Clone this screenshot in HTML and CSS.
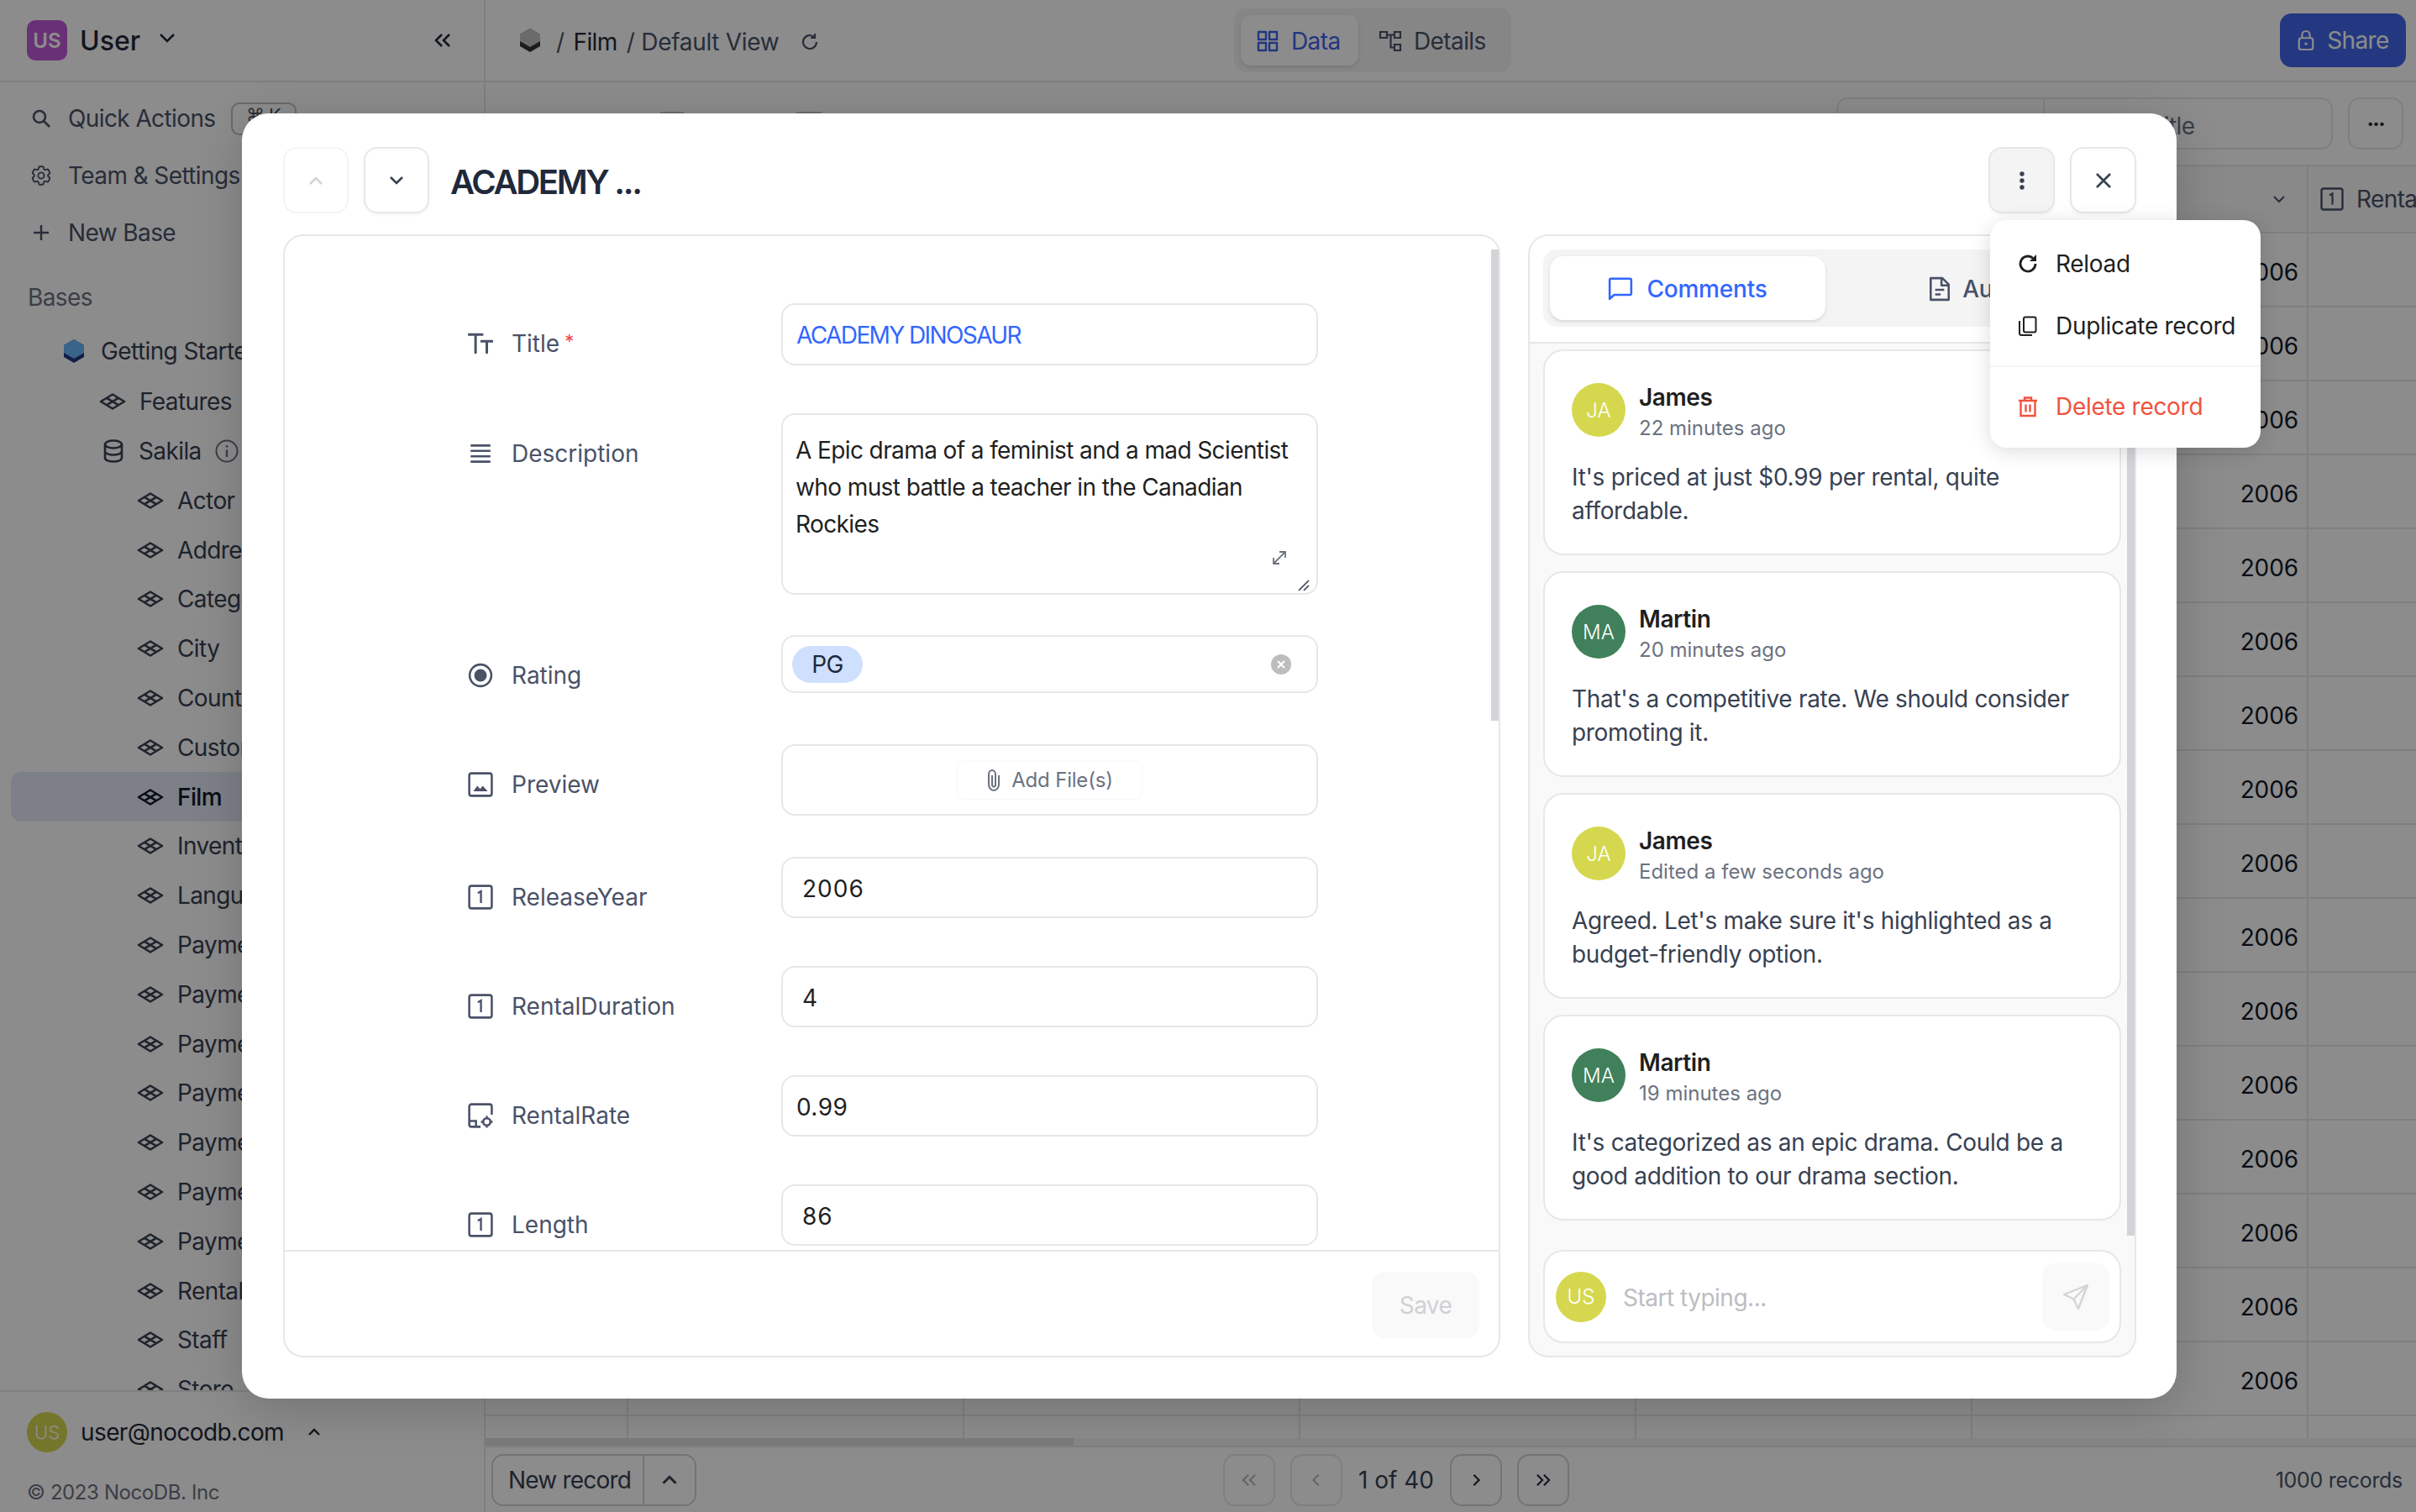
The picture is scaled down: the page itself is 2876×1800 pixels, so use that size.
FILE: index.html
```html
<!DOCTYPE html>
<html>
<head>
  <title>Film - NocoDB</title>
  <link rel="stylesheet" href="styles.css">
</head>
<body>
  <svg class="sprite" width="0" height="0">
    <symbol id="i-table" viewBox="0 0 32 20"><path d="M16 1.5 30 10 16 18.5 2 10Z M9 5.8 23 14.2 M23 5.8 9 14.2" fill="none" stroke="currentColor" stroke-width="2.6" stroke-linejoin="round"/></symbol>
    <symbol id="i-num" viewBox="0 0 28 28"><rect x="1.5" y="1.5" width="25" height="25" rx="2.5" fill="none" stroke="currentColor" stroke-width="2.4"/><path d="M11 9.5 14.5 7.5V20.5" fill="none" stroke="currentColor" stroke-width="2.2"/></symbol>
  </svg>

  <div class="app">
    <aside class="sidebar">
      <div class="side-head">
        <span class="org-avatar">US</span>
        <span class="org-name">User</span>
        <svg class="side-chevron" viewBox="0 0 20 12"><path d="M2 2 10 10 18 2" fill="none" stroke="currentColor" stroke-width="2.6"/></svg>
        <svg class="side-collapse" viewBox="0 0 22 18"><path d="M10 2 3 9 10 16M19 2 12 9 19 16" fill="none" stroke="currentColor" stroke-width="2.6"/></svg>
      </div>
      <div class="side-scroll">
        <div class="nav-item">
          <svg class="nav-icon" viewBox="0 0 24 24"><circle cx="10" cy="10" r="7" fill="none" stroke="currentColor" stroke-width="2.6"/><path d="M15 15 22 22" stroke="currentColor" stroke-width="2.6"/></svg>
          <span>Quick Actions</span><span class="kbd">⌘ K</span>
        </div>
        <div class="nav-item">
          <svg class="nav-icon" viewBox="2 2 20 20"><path d="M9.594 3.94c.09-.542.56-.94 1.11-.94h2.593c.55 0 1.02.398 1.11.94l.213 1.281c.063.374.313.686.645.87.074.04.147.083.22.127.324.196.72.257 1.075.124l1.217-.456a1.125 1.125 0 011.37.49l1.296 2.247a1.125 1.125 0 01-.26 1.431l-1.003.827c-.293.24-.438.613-.431.992a6.759 6.759 0 010 .255c-.007.378.138.75.43.99l1.005.828c.424.35.534.954.26 1.43l-1.298 2.247a1.125 1.125 0 01-1.369.491l-1.217-.456c-.355-.133-.75-.072-1.076.124a6.57 6.57 0 01-.22.128c-.331.183-.581.495-.644.869l-.213 1.28c-.09.543-.56.941-1.11.941h-2.594c-.55 0-1.02-.398-1.11-.94l-.213-1.281c-.062-.374-.312-.686-.644-.87a6.52 6.52 0 01-.22-.127c-.325-.196-.72-.257-1.076-.124l-1.217.456a1.125 1.125 0 01-1.369-.49l-1.297-2.247a1.125 1.125 0 01.26-1.431l1.004-.827c.292-.24.437-.613.43-.992a6.932 6.932 0 010-.255c.007-.378-.138-.75-.43-.99l-1.004-.828a1.125 1.125 0 01-.26-1.43l1.297-2.247a1.125 1.125 0 011.37-.491l1.216.456c.356.133.751.072 1.076-.124.072-.044.146-.087.22-.128.332-.183.582-.495.644-.869l.214-1.281z" fill="none" stroke="currentColor" stroke-width="1.6"/><circle cx="12" cy="12" r="3" fill="none" stroke="currentColor" stroke-width="1.6"/></svg>
          <span>Team &amp; Settings</span>
        </div>
        <div class="nav-item">
          <svg class="nav-icon" viewBox="0 0 24 24"><path d="M12 3V21M3 12H21" stroke="currentColor" stroke-width="2.4"/></svg>
          <span>New Base</span>
        </div>
        <div class="side-label">Bases</div>
        <div class="tree-item tree-base">
          <svg class="base-icon" viewBox="0 0 26 30"><path d="M13 1 25 8V22L13 29 1 22V8Z" fill="#213788"/><path d="M13 1 25 8V17L13 24 1 17V8Z" fill="#6ab8f7"/></svg>
          <span>Getting Started</span>
        </div>
        <div class="tree-item tree-sub"><svg class="table-icon"><use href="#i-table"/></svg><span>Features</span></div>
        <div class="tree-item tree-sub">
          <svg class="db-icon" viewBox="0 0 24 28"><ellipse cx="12" cy="6" rx="10" ry="4.5" fill="none" stroke="currentColor" stroke-width="2.6"/><path d="M2 6V22C2 25 7 26.5 12 26.5S22 25 22 22V6M2 14C2 17 7 18.5 12 18.5S22 17 22 14" fill="none" stroke="currentColor" stroke-width="2.6"/></svg>
          <span>Sakila</span>
          <svg class="info-icon" viewBox="0 0 28 28"><circle cx="14" cy="14" r="12.5" fill="none" stroke="currentColor" stroke-width="2"/><path d="M14 12.5V21M14 7V9.5" stroke="currentColor" stroke-width="2.4"/></svg>
        </div>
        <div class="tree-item tree-table"><svg class="table-icon"><use href="#i-table"/></svg><span>Actor</span></div>
        <div class="tree-item tree-table"><svg class="table-icon"><use href="#i-table"/></svg><span>Address</span></div>
        <div class="tree-item tree-table"><svg class="table-icon"><use href="#i-table"/></svg><span>Category</span></div>
        <div class="tree-item tree-table"><svg class="table-icon"><use href="#i-table"/></svg><span>City</span></div>
        <div class="tree-item tree-table"><svg class="table-icon"><use href="#i-table"/></svg><span>Country</span></div>
        <div class="tree-item tree-table"><svg class="table-icon"><use href="#i-table"/></svg><span>Customer</span></div>
        <div class="tree-item tree-table tree-active"><svg class="table-icon"><use href="#i-table"/></svg><span>Film</span></div>
        <div class="tree-item tree-table"><svg class="table-icon"><use href="#i-table"/></svg><span>Inventory</span></div>
        <div class="tree-item tree-table"><svg class="table-icon"><use href="#i-table"/></svg><span>Language</span></div>
        <div class="tree-item tree-table"><svg class="table-icon"><use href="#i-table"/></svg><span>Payment</span></div>
        <div class="tree-item tree-table"><svg class="table-icon"><use href="#i-table"/></svg><span>Payment</span></div>
        <div class="tree-item tree-table"><svg class="table-icon"><use href="#i-table"/></svg><span>Payment</span></div>
        <div class="tree-item tree-table"><svg class="table-icon"><use href="#i-table"/></svg><span>Payment</span></div>
        <div class="tree-item tree-table"><svg class="table-icon"><use href="#i-table"/></svg><span>Payment</span></div>
        <div class="tree-item tree-table"><svg class="table-icon"><use href="#i-table"/></svg><span>Payment</span></div>
        <div class="tree-item tree-table"><svg class="table-icon"><use href="#i-table"/></svg><span>Payment</span></div>
        <div class="tree-item tree-table"><svg class="table-icon"><use href="#i-table"/></svg><span>Rental</span></div>
        <div class="tree-item tree-table"><svg class="table-icon"><use href="#i-table"/></svg><span>Staff</span></div>
        <div class="tree-item tree-table"><svg class="table-icon"><use href="#i-table"/></svg><span>Store</span></div>
      </div>
      <div class="side-foot">
        <div class="user-row">
          <span class="avatar avatar-side">US</span>
          <span>user@nocodb.com</span>
          <svg class="user-chevron" viewBox="0 0 16 10"><path d="M2 8 8 2 14 8" fill="none" stroke="currentColor" stroke-width="2.4"/></svg>
        </div>
        <div class="copyright">© 2023 NocoDB. Inc</div>
      </div>
    </aside>

    <main class="main">
      <header class="topbar">
        <div class="crumbs">
          <svg class="crumb-icon" viewBox="0 0 26 30"><path d="M13 1 25 8V22L13 29 1 22V8Z" fill="#333333"/><path d="M13 1 25 8V16L13 23 1 16V8Z" fill="#c4c4c4"/></svg>
          <span class="crumb-sep">/</span>
          <span class="crumb-strong">Film</span>
          <span class="crumb-sep">/</span>
          <span class="crumb-view">Default View</span>
          <svg class="crumb-reload" viewBox="0 0 24 24"><path d="M20 12A8 8 0 1 1 17.5 6.2M18 2V7H13" fill="none" stroke="currentColor" stroke-width="2.2"/></svg>
        </div>
        <div class="view-tabs">
          <div class="view-tab view-tab-on">
            <svg class="view-icon" viewBox="0 0 28 28"><path d="M3 3H12V12H3ZM16 3H25V12H16ZM3 16H12V25H3ZM16 16H25V25H16Z" fill="none" stroke="currentColor" stroke-width="2.4" stroke-linejoin="round"/></svg>
            <span>Data</span>
          </div>
          <div class="view-tab view-tab-off">
            <svg class="view-icon" viewBox="0 0 28 28"><path d="M2 3H10V10H2ZM19 3H26V10H19ZM19 18H26V25H19ZM10 6.5H19M14.5 6.5V21.5H19" fill="none" stroke="currentColor" stroke-width="2.2"/></svg>
            <span>Details</span>
          </div>
        </div>
        <div class="share-btn">
          <svg class="share-icon" viewBox="0 0 24 28"><rect x="3" y="11" width="18" height="15" rx="3" fill="none" stroke="currentColor" stroke-width="2.4"/><path d="M7 11V7A5 5 0 0 1 17 7V11" fill="none" stroke="currentColor" stroke-width="2.4"/><circle cx="12" cy="18.5" r="1.8" fill="currentColor"/></svg>
          <span>Share</span>
        </div>
      </header>

      <div class="toolbar">
        <div class="tool-hint tool-hint-a"></div>
        <div class="tool-hint tool-hint-b"></div>
        <div class="search-box"><div class="search-field"></div><div class="search-input">Filter by Title</div></div>
        <div class="more-btn">•••</div>
      </div>

      <div class="grid-head">
        <svg class="grid-chevron" viewBox="0 0 16 10"><path d="M2 2 8 8 14 2" fill="none" stroke="currentColor" stroke-width="2"/></svg>
        <div class="head-cell">
          <svg class="num-head-icon"><use href="#i-num"/></svg>
          <span>RentalDuration</span>
        </div>
      </div>

      <div class="grid-body">
        <div class="grid-row"><span class="year">2006</span></div>
        <div class="grid-row"><span class="year">2006</span></div>
        <div class="grid-row"><span class="year">2006</span></div>
        <div class="grid-row"><span class="year">2006</span></div>
        <div class="grid-row"><span class="year">2006</span></div>
        <div class="grid-row"><span class="year">2006</span></div>
        <div class="grid-row"><span class="year">2006</span></div>
        <div class="grid-row"><span class="year">2006</span></div>
        <div class="grid-row"><span class="year">2006</span></div>
        <div class="grid-row"><span class="year">2006</span></div>
        <div class="grid-row"><span class="year">2006</span></div>
        <div class="grid-row"><span class="year">2006</span></div>
        <div class="grid-row"><span class="year">2006</span></div>
        <div class="grid-row"><span class="year">2006</span></div>
        <div class="grid-row"><span class="year">2006</span></div>
        <div class="grid-row"><span class="year">2006</span></div>
      </div>

      <div class="h-scroll"><div class="h-thumb"></div></div>

      <footer class="main-foot">
        <div class="new-record"><span class="new-label">New record</span><span class="new-caret"><svg class="foot-svg" viewBox="0 0 16 10"><path d="M2 8 8 2 14 8" fill="none" stroke="currentColor" stroke-width="2.4"/></svg></span></div>
        <div class="pager">
          <span class="page-btn page-off"><svg class="foot-svg" viewBox="0 0 22 18"><path d="M10 2 3 9 10 16M19 2 12 9 19 16" fill="none" stroke="currentColor" stroke-width="2.4"/></svg></span>
          <span class="page-btn page-off"><svg class="foot-svg" viewBox="0 0 22 18"><path d="M14 2 7 9 14 16" fill="none" stroke="currentColor" stroke-width="2.4"/></svg></span>
          <span class="page-text">1 of 40</span>
          <span class="page-btn"><svg class="foot-svg" viewBox="0 0 22 18"><path d="M8 2 15 9 8 16" fill="none" stroke="currentColor" stroke-width="2.4"/></svg></span>
          <span class="page-btn"><svg class="foot-svg" viewBox="0 0 22 18"><path d="M3 2 10 9 3 16M12 2 19 9 12 16" fill="none" stroke="currentColor" stroke-width="2.4"/></svg></span>
        </div>
        <div class="record-count">1000 records</div>
      </footer>
    </main>
  </div>

  <div class="overlay">
    <div class="modal">
      <div class="modal-head">
        <button class="sq-btn sq-off"><svg class="sq-svg" viewBox="0 0 18 12"><path d="M2 10 9 3 16 10" fill="none" stroke="currentColor" stroke-width="2.6"/></svg></button>
        <button class="sq-btn"><svg class="sq-svg" viewBox="0 0 18 12"><path d="M2 2 9 9 16 2" fill="none" stroke="currentColor" stroke-width="2.6"/></svg></button>
        <h1 class="modal-title">ACADEMY ...</h1>
        <button class="sq-btn sq-round sq-on">
          <svg class="dots-svg" viewBox="0 0 8 24"><circle cx="4" cy="4" r="2.7"/><circle cx="4" cy="12" r="2.7"/><circle cx="4" cy="20" r="2.7"/></svg>
        </button>
        <button class="sq-btn sq-round"><svg class="x-svg" viewBox="0 0 20 20"><path d="M2 2 18 18M18 2 2 18" fill="none" stroke="currentColor" stroke-width="2.6"/></svg></button>
      </div>

      <div class="modal-body">
        <section class="form-panel">
          <div class="form-scroll">
            <div class="form-row">
              <label class="field-label">
                <svg class="field-icon" viewBox="0 0 28 28"><path d="M1 4H16M8.5 4V24M15 11.5H27M21 11.5V24" fill="none" stroke="currentColor" stroke-width="2.8" stroke-linecap="round"/></svg>
                <span>Title</span><span class="req">*</span>
              </label>
              <div class="field field-title">ACADEMY DINOSAUR</div>
            </div>
            <div class="form-row gap-desc">
              <label class="field-label">
                <svg class="field-icon" viewBox="0 0 28 28"><path d="M3 5H25M3 11H25M3 17H25M3 23H25" fill="none" stroke="currentColor" stroke-width="2.4"/></svg>
                <span>Description</span>
              </label>
              <div class="field field-desc">
                A Epic drama of a feminist and a mad Scientist who must battle a teacher in the Canadian Rockies
                <svg class="expand-icon" viewBox="0 0 20 20"><path d="M3 17 17 3M10 3H17V10M3 10V17H10" fill="none" stroke="currentColor" stroke-width="1.8"/></svg>
                <svg class="resize-grip" viewBox="0 0 14 14"><path d="M1 13 13 1M7 13 13 7" stroke="currentColor" stroke-width="1.6"/></svg>
              </div>
            </div>
            <div class="form-row gap-rating">
              <label class="field-label">
                <svg class="field-icon" viewBox="0 0 28 28"><circle cx="14" cy="14" r="12" fill="none" stroke="currentColor" stroke-width="2.4"/><circle cx="14" cy="14" r="7" fill="currentColor"/></svg>
                <span>Rating</span>
              </label>
              <div class="field field-rating">
                <span class="pill">PG</span>
                <svg class="clear-icon" viewBox="0 0 24 24"><circle cx="12" cy="12" r="12" fill="#bdbdbd"/><path d="M8 8 16 16M16 8 8 16" stroke="#fff" stroke-width="2"/></svg>
              </div>
            </div>
            <div class="form-row gap-preview">
              <label class="field-label">
                <svg class="field-icon" viewBox="0 0 28 28"><rect x="1.5" y="1.5" width="25" height="25" rx="2.5" fill="none" stroke="currentColor" stroke-width="2.4"/><path d="M6 21.5 10.5 15.5 13.5 19 16.5 15.5 22 21.5Z" fill="currentColor"/></svg>
                <span>Preview</span>
              </label>
              <div class="field field-preview">
                <div class="add-files">
                  <svg class="clip-icon" viewBox="0 0 18 28"><path d="M15 8V19A6 7 0 0 1 3 19V7A4 5 0 0 1 11 7V19A2 2.5 0 0 1 7 19V8" fill="none" stroke="currentColor" stroke-width="2"/></svg>
                  <span>Add File(s)</span>
                </div>
              </div>
            </div>
            <div class="form-row">
              <label class="field-label"><svg class="field-icon"><use href="#i-num"/></svg><span>ReleaseYear</span></label>
              <div class="field field-num">2006</div>
            </div>
            <div class="form-row">
              <label class="field-label"><svg class="field-icon"><use href="#i-num"/></svg><span>RentalDuration</span></label>
              <div class="field field-num">4</div>
            </div>
            <div class="form-row">
              <label class="field-label">
                <svg class="field-icon" viewBox="0 0 28 28"><path d="M14 26.5H4A2.5 2.5 0 0 1 1.5 24V4A2.5 2.5 0 0 1 4 1.5H24A2.5 2.5 0 0 1 26.5 4V13M2 20H9V26" fill="none" stroke="currentColor" stroke-width="2.4"/><circle cx="21" cy="21" r="4" fill="none" stroke="currentColor" stroke-width="2.4"/><path d="M21 14.5V17M21 25V27.5M14.5 21H17M25 21H27.5" stroke="currentColor" stroke-width="2.2"/></svg>
                <span>RentalRate</span>
              </label>
              <div class="field field-num field-rate">0.99</div>
            </div>
            <div class="form-row">
              <label class="field-label"><svg class="field-icon"><use href="#i-num"/></svg><span>Length</span></label>
              <div class="field field-num">86</div>
            </div>
          </div>
          <div class="form-scrollbar"></div>
          <div class="form-foot"><button class="save-btn">Save</button></div>
        </section>

        <section class="side-panel">
          <div class="tabs-wrap">
            <div class="tabs">
              <div class="tab tab-on">
                <svg class="tab-icon" viewBox="0 0 28 28"><path d="M2 25V4A1.5 1.5 0 0 1 3.5 2.5H24.5A1.5 1.5 0 0 1 26 4V19A1.5 1.5 0 0 1 24.5 20.5H7L2 25Z" fill="none" stroke="currentColor" stroke-width="2.4" stroke-linejoin="round"/></svg>
                <span>Comments</span>
              </div>
              <div class="tab tab-audit">
                <svg class="tab-icon" viewBox="0 0 28 28"><path d="M4 2H17L24 9V26H4ZM16 2V10H24M9 15H19M9 20H15" fill="none" stroke="currentColor" stroke-width="2.4" stroke-linejoin="round"/></svg>
                <span>Audit</span>
              </div>
            </div>
          </div>
          <div class="comments-scroll">
            <article class="comment">
              <div class="comment-head">
                <span class="avatar avatar-ja">JA</span>
                <div><div class="comment-name">James</div><div class="comment-time">22 minutes ago</div></div>
              </div>
              <p class="comment-text">It's priced at just $0.99 per rental, quite affordable.</p>
            </article>
            <article class="comment">
              <div class="comment-head">
                <span class="avatar avatar-ma">MA</span>
                <div><div class="comment-name">Martin</div><div class="comment-time">20 minutes ago</div></div>
              </div>
              <p class="comment-text">That's a competitive rate. We should consider promoting it.</p>
            </article>
            <article class="comment">
              <div class="comment-head">
                <span class="avatar avatar-ja">JA</span>
                <div><div class="comment-name">James</div><div class="comment-time">Edited a few seconds ago</div></div>
              </div>
              <p class="comment-text">Agreed. Let's make sure it's highlighted as a budget-friendly option.</p>
            </article>
            <article class="comment">
              <div class="comment-head">
                <span class="avatar avatar-ma">MA</span>
                <div><div class="comment-name">Martin</div><div class="comment-time">19 minutes ago</div></div>
              </div>
              <p class="comment-text">It's categorized as an epic drama. Could be a good addition to our drama section.</p>
            </article>
            <div class="comments-bar"></div>
          </div>
          <div class="reply-box">
            <span class="avatar avatar-ja avatar-reply">US</span>
            <span class="reply-input">Start typing...</span>
            <button class="send-btn"><svg class="send-svg" viewBox="0 0 32 32"><path d="M30 2 2 13 13.5 18.5 19 30Z M30 2 13.5 18.5" fill="none" stroke="currentColor" stroke-width="2.4" stroke-linejoin="round"/></svg></button>
          </div>
        </section>
      </div>

      <div class="menu">
        <div class="menu-item">
          <svg class="menu-icon" viewBox="0 0 24 24"><path d="M21 12A9 9 0 1 1 18 5.3" fill="none" stroke="currentColor" stroke-width="2.8"/><path d="M22 1V9H14Z" fill="currentColor"/></svg>
          <span>Reload</span>
        </div>
        <div class="menu-item">
          <svg class="menu-icon" viewBox="0 0 24 24"><rect x="7" y="1.5" width="14.5" height="18" rx="2" fill="none" stroke="currentColor" stroke-width="2"/><path d="M2 6V20.5A2.5 2.5 0 0 0 4.5 23H17" fill="none" stroke="currentColor" stroke-width="2"/></svg>
          <span>Duplicate record</span>
        </div>
        <div class="menu-line"></div>
        <div class="menu-item menu-danger">
          <svg class="menu-icon" viewBox="0 0 24 24"><path d="M1 5H23M8 5V1.5H16V5M3.5 5V23H20.5V5M9.5 9.5V18.5M14.5 9.5V18.5" fill="none" stroke="currentColor" stroke-width="2.4"/></svg>
          <span>Delete record</span>
        </div>
      </div>
    </div>
  </div>
</body>
</html>
```

FILE: styles.css
```css
* {
  box-sizing: border-box;
}

html, body {
  margin: 0;
  padding: 0;
  width: 2876px;
  height: 1800px;
  overflow: hidden;
}

body {
  font-family: Inter, "Noto Sans", sans-serif;
  font-size: 28px;
  letter-spacing: -0.6px;
  color: #374151;
  background-color: #ffffff;
}

button {
  font-family: inherit;
  font-size: inherit;
  letter-spacing: inherit;
  padding: 0;
  cursor: pointer;
}

svg {
  display: block;
  flex-shrink: 0;
}

.sprite {
  position: absolute;
}

.app {
  display: flex;
  width: 2876px;
  height: 1800px;
}

/* sidebar */
.sidebar {
  width: 578px;
  flex-shrink: 0;
  display: flex;
  flex-direction: column;
  border-right: 2px solid #e7e7e9;
}

.side-head {
  height: 98px;
  display: flex;
  align-items: center;
  padding-left: 32px;
  flex-shrink: 0;
  border-bottom: 2px solid #e7e7e9;
}

.org-avatar {
  width: 48px;
  height: 48px;
  border-radius: 10px;
  background-color: #c05ad6;
  color: #ffffff;
  font-size: 24px;
  font-weight: 600;
  letter-spacing: 0;
  display: flex;
  align-items: center;
  justify-content: center;
}

.org-name {
  margin-left: 15px;
  font-size: 32px;
  font-weight: 500;
  letter-spacing: 0;
  color: #1f2937;
}

.side-chevron {
  width: 20px;
  height: 12px;
  margin-left: 22px;
  margin-top: -6px;
  color: #1f2937;
}

.side-collapse {
  width: 22px;
  height: 18px;
  margin-left: auto;
  margin-right: 38px;
  color: #1f2937;
}

.side-scroll {
  flex: 1;
  overflow: hidden;
  padding-top: 9px;
}

.nav-item {
  height: 68px;
  display: flex;
  align-items: center;
  padding-left: 37px;
  gap: 20px;
  color: #4a5268;
}

.nav-icon {
  width: 24px;
  height: 24px;
}

.kbd {
  width: 78px;
  height: 39px;
  margin-left: -2px;
  border: 2px solid #bfbfc4;
  border-radius: 10px;
  font-size: 22px;
  text-align: center;
  color: #4a5268;
}

.side-label {
  height: 40px;
  margin-top: 23px;
  padding-left: 33px;
  line-height: 40px;
  color: #6b7280;
}

.tree-item {
  height: 58.8px;
  display: flex;
  align-items: center;
  color: #374151;
}

.tree-base {
  height: 60.8px;
  margin-top: 14px;
  padding-left: 75px;
  gap: 19px;
}

.base-icon {
  width: 26px;
  height: 30px;
}

.tree-sub {
  padding-left: 118px;
  gap: 16px;
}

.tree-table {
  padding-left: 163px;
  gap: 16px;
}

.tree-active {
  margin-left: 13px;
  padding-left: 150px;
  border-radius: 12px;
  background-color: #e3e9f8;
  color: #111827;
  font-weight: 500;
}

.table-icon {
  width: 32px;
  height: 20px;
}

.db-icon {
  width: 24px;
  height: 28px;
  margin-left: 5px;
  margin-right: 2px;
}

.info-icon {
  width: 28px;
  height: 28px;
  color: #6b7280;
}

.side-foot {
  height: 145px;
  flex-shrink: 0;
  border-top: 2px solid #e7e7e9;
  padding-left: 32px;
}

.user-row {
  height: 48px;
  margin-top: 24px;
  display: flex;
  align-items: center;
  gap: 16px;
  color: #1f2937;
}

.avatar {
  width: 64px;
  height: 64px;
  border-radius: 50%;
  flex-shrink: 0;
  display: flex;
  align-items: center;
  justify-content: center;
  color: #ffffff;
  font-size: 24px;
  font-weight: 300;
  letter-spacing: 0;
}

.avatar-side {
  width: 48px;
  height: 48px;
  background-color: #d4d84f;
  font-size: 22px;
}

.user-chevron {
  width: 16px;
  height: 10px;
  margin-left: 12px;
}

.copyright {
  margin-top: 33px;
  font-size: 24px;
  letter-spacing: -0.4px;
  color: #6b7280;
}

/* main area behind the dialog */
.main {
  flex: 1;
  min-width: 0;
  display: flex;
  flex-direction: column;
}

.topbar {
  height: 98px;
  flex-shrink: 0;
  display: flex;
  align-items: center;
  padding: 0 12px 0 40px;
  border-bottom: 2px solid #e7e7e9;
}

.crumbs {
  width: 851px;
  display: flex;
  align-items: center;
  gap: 11px;
  padding-top: 4px;
  color: #4a5268;
}

.crumb-icon {
  width: 26px;
  height: 30px;
  margin-right: 7px;
  margin-top: -4px;
}

.crumb-strong {
  color: #1f2937;
}

.crumb-view {
  margin-left: -3px;
  letter-spacing: -0.3px;
}

.crumb-reload {
  width: 24px;
  height: 24px;
  margin-left: 14px;
}

.view-tabs {
  width: 330px;
  height: 76px;
  padding: 8px;
  display: flex;
  gap: 8px;
  border-radius: 14px;
  background-color: #f4f4f5;
}

.view-tab {
  display: flex;
  align-items: center;
  gap: 14px;
  padding: 2px 14px 0 18px;
  border-radius: 12px;
  color: #4a5268;
}

.view-tab-on {
  width: 140px;
  background-color: #ffffff;
  box-shadow: 0 2px 4px rgba(0, 0, 0, 0.12);
  color: #3f63ea;
}

.view-tab-off {
  padding-left: 16px;
}

.view-icon {
  width: 28px;
  height: 28px;
}

.share-btn {
  width: 150px;
  height: 64px;
  margin-left: auto;
  display: flex;
  align-items: center;
  justify-content: center;
  gap: 14px;
  border-radius: 14px;
  background-color: #4166ea;
  color: #ffffff;
}

.share-icon {
  width: 22px;
  height: 26px;
}

.toolbar {
  height: 98px;
  flex-shrink: 0;
  display: flex;
  gap: 18px;
  padding: 18px 15px 0 0;
}

.tool-hint {
  height: 10px;
  margin-top: 17px;
  background-color: #c8c8cc;
}

.tool-hint-a {
  width: 28px;
  margin-left: 208px;
}

.tool-hint-b {
  width: 30px;
  margin-left: 116px;
  margin-right: auto;
}

.search-box {
  width: 591px;
  height: 62px;
  display: flex;
  border: 2px solid #e7e7e9;
  border-radius: 14px;
}

.search-field {
  width: 246px;
  border-right: 2px solid #e7e7e9;
}

.search-input {
  padding-left: 16px;
  line-height: 64px;
  color: #6b7280;
}

.more-btn {
  width: 66px;
  height: 62px;
  border: 2px solid #e7e7e9;
  border-radius: 14px;
  font-size: 14px;
  letter-spacing: -1px;
  line-height: 58px;
  text-align: center;
  color: #1f2937;
}

.grid-head {
  height: 82px;
  flex-shrink: 0;
  display: flex;
  align-items: center;
  padding-left: 2127px;
  border-top: 2px solid #e7e7e9;
  border-bottom: 2px solid #e7e7e9;
  background-color: #f9f9fa;
  color: #4a5268;
}

.grid-chevron {
  width: 16px;
  height: 10px;
}

.head-cell {
  height: 100%;
  margin-left: 25px;
  display: flex;
  align-items: center;
  border-left: 2px solid #e7e7e9;
  padding-left: 14px;
  white-space: nowrap;
}

.num-head-icon {
  width: 28px;
  height: 28px;
  margin-right: 15px;
}

.grid-body {
  flex: 1;
  background-image: linear-gradient(to right, transparent 398px, #e7e7e9 398px);
  background-size: 400px 100%;
  background-position: 170px 0;
}

.grid-row {
  height: 88px;
  display: flex;
  align-items: center;
  padding-top: 6px;
  border-bottom: 2px solid #e7e7e9;
}

.year {
  width: 2158px;
  text-align: right;
  color: #111827;
  letter-spacing: -0.1px;
}

.h-scroll {
  height: 9px;
  flex-shrink: 0;
  background-color: #f4f4f5;
}

.h-thumb {
  width: 700px;
  height: 9px;
  background-color: #e0e0e3;
}

.main-foot {
  height: 79px;
  flex-shrink: 0;
  display: flex;
  align-items: center;
  padding: 0 16px 0 7px;
  border-top: 2px solid #e7e7e9;
}

.new-record {
  width: 244px;
  height: 62px;
  display: flex;
  align-items: center;
  border: 2px solid #d4d4d8;
  border-radius: 14px;
  color: #374151;
}

.new-label {
  width: 180px;
  line-height: 58px;
  padding-left: 18px;
  letter-spacing: -0.8px;
  border-right: 2px solid #d4d4d8;
}

.new-caret {
  flex: 1;
  display: flex;
  justify-content: center;
}

.foot-svg {
  width: 20px;
  height: 16px;
}

.pager {
  display: flex;
  align-items: center;
  gap: 18px;
  margin-left: 627px;
}

.page-btn {
  width: 62px;
  height: 62px;
  display: flex;
  align-items: center;
  justify-content: center;
  border: 2px solid #d4d4d8;
  border-radius: 14px;
  color: #1f2937;
}

.page-off {
  border-color: #e7e7e9;
  color: #b8b8bc;
}

.page-text {
  width: 92px;
  text-align: center;
  color: #374151;
  white-space: nowrap;
  letter-spacing: 0;
}

.record-count {
  margin-left: auto;
  font-size: 25px;
  letter-spacing: -0.3px;
  color: #4a5268;
}

/* dialog */
.overlay {
  position: absolute;
  top: 0;
  left: 0;
  width: 2876px;
  height: 1800px;
  padding: 135px 285px 135px 288px;
  background-color: rgba(0, 0, 0, 0.45);
}

.modal {
  position: relative;
  height: 1530px;
  padding: 40px 48px 49px 49px;
  display: flex;
  flex-direction: column;
  border-radius: 32px;
  background-color: #ffffff;
  box-shadow: 0 12px 60px rgba(0, 0, 0, 0.18);
}

.modal-head {
  height: 79px;
  flex-shrink: 0;
  display: flex;
  align-items: center;
  gap: 18px;
}

.sq-btn {
  width: 78px;
  height: 79px;
  display: flex;
  align-items: center;
  justify-content: center;
  border: 2px solid #e7e7e9;
  border-radius: 16px;
  background-color: #ffffff;
  color: #374151;
  box-shadow: 0 2px 4px rgba(0, 0, 0, 0.04);
}

.sq-off {
  border-color: #f4f4f5;
  color: #d4d4d8;
  box-shadow: none;
}

.sq-round {
  width: 79px;
}

.sq-on {
  background-color: #f4f4f5;
}

.sq-svg {
  width: 18px;
  height: 12px;
}

.dots-svg {
  width: 8px;
  height: 24px;
  fill: #374151;
}

.x-svg {
  width: 20px;
  height: 20px;
}

.modal-title {
  flex: 1;
  margin: 3px 0 0 7px;
  font-size: 40px;
  font-weight: 600;
  letter-spacing: -2.3px;
  color: #1f293a;
}

.modal-body {
  flex: 1;
  min-height: 0;
  margin-top: 25px;
  display: flex;
  gap: 33px;
}

.form-panel {
  width: 1449px;
  flex-shrink: 0;
  position: relative;
  display: flex;
  flex-direction: column;
  border: 2px solid #e7e7e9;
  border-radius: 24px;
}

.form-scroll {
  height: 1207px;
  flex-shrink: 0;
  overflow: hidden;
  padding: 80px 0 0 218px;
}

.form-scrollbar {
  position: absolute;
  top: 16px;
  right: 0;
  width: 9px;
  height: 561px;
  background-color: #d4d4d8;
}

.form-row {
  display: flex;
  align-items: flex-start;
  margin-bottom: 57px;
}

.gap-desc {
  margin-bottom: 48px;
}

.gap-rating {
  margin-bottom: 61px;
}

.gap-preview {
  margin-bottom: 49px;
}

.field-label {
  width: 373px;
  height: 40px;
  margin-top: 28px;
  display: flex;
  align-items: center;
  letter-spacing: 0;
  color: #4a5268;
}

.field-label span:first-of-type {
  margin-left: 22px;
}

.field-icon {
  width: 30px;
  height: 30px;
}

.req {
  margin-left: 6px;
  margin-top: -6px;
  font-size: 22px;
  color: #ef4444;
}

.field {
  width: 639px;
  height: 73px;
  position: relative;
  border: 2px solid #e7e7e9;
  border-radius: 16px;
  color: #1f1f1f;
}

.field-title {
  height: 74px;
  padding-left: 16px;
  line-height: 72px;
  letter-spacing: -1.6px;
  color: #3366ff;
}

.field-desc {
  height: 216px;
  padding: 20px 15px 0;
  line-height: 44px;
}

.expand-icon {
  position: absolute;
  right: 34px;
  bottom: 32px;
  width: 20px;
  height: 20px;
  color: #6b7280;
}

.resize-grip {
  position: absolute;
  right: 8px;
  bottom: 2px;
  width: 14px;
  height: 14px;
  color: #374151;
}

.field-rating {
  height: 69px;
  display: flex;
  align-items: center;
  justify-content: space-between;
  padding: 0 30px 0 11px;
}

.pill {
  width: 84px;
  height: 44px;
  line-height: 44px;
  text-align: center;
  border-radius: 22px;
  background-color: #cfdffe;
  color: #1f293a;
}

.clear-icon {
  width: 24px;
  height: 24px;
}

.field-preview {
  height: 85px;
  display: flex;
  align-items: center;
  justify-content: center;
}

.add-files {
  width: 219px;
  height: 44px;
  display: flex;
  align-items: center;
  justify-content: center;
  gap: 12px;
  border-radius: 8px;
  font-size: 24px;
  letter-spacing: -0.2px;
  color: #6b7280;
  box-shadow: 0 0 3px rgba(0, 0, 0, 0.08);
}

.clip-icon {
  width: 18px;
  height: 28px;
}

.field-num {
  padding-left: 23px;
  line-height: 73px;
  letter-spacing: 1px;
}

.field-rate {
  padding-left: 16px;
  letter-spacing: 0.4px;
}

.form-foot {
  flex: 1;
  display: flex;
  justify-content: flex-end;
  align-items: flex-start;
  padding: 24px 23px 0 0;
  border-top: 2px solid #e7e7e9;
}

.save-btn {
  width: 128px;
  height: 79px;
  border: none;
  border-radius: 16px;
  background-color: #f9f9fa;
  color: #d0d0d4;
}

/* comments panel */
.side-panel {
  flex: 1;
  min-width: 0;
  display: flex;
  flex-direction: column;
  border: 2px solid #e7e7e9;
  border-radius: 24px;
  background-color: #f9f9fa;
}

.tabs-wrap {
  height: 128px;
  flex-shrink: 0;
  padding: 16px 16px 0;
  border-bottom: 2px solid #e7e7e9;
  border-radius: 22px 22px 0 0;
  background-color: #ffffff;
}

.tabs {
  height: 92px;
  padding: 8px;
  display: flex;
  gap: 16px;
  border-radius: 16px;
  background-color: #f4f4f5;
}

.tab {
  width: 328px;
  display: flex;
  align-items: center;
  justify-content: center;
  gap: 16px;
  padding-top: 2px;
  border-radius: 16px;
  font-weight: 500;
  letter-spacing: -0.2px;
  color: #4a5268;
}

.tab-on {
  background-color: #ffffff;
  color: #3366ff;
  box-shadow: 0 2px 4px rgba(0, 0, 0, 0.12);
}

.tab-audit {
  gap: 12px;
  padding-right: 6px;
}

.tab-icon {
  width: 30px;
  height: 30px;
}

.comments-scroll {
  height: 1063px;
  flex-shrink: 0;
  position: relative;
  overflow: hidden;
  padding: 7px 16px 0;
  display: flex;
  flex-direction: column;
  gap: 19px;
}

.comment {
  width: 688px;
  height: 245px;
  flex-shrink: 0;
  padding: 38px 32px 0;
  border: 2px solid #e7e7e9;
  border-radius: 24px;
  background-color: #ffffff;
}

.comment-head {
  display: flex;
  gap: 16px;
}

.comment-name {
  height: 36px;
  font-weight: 600;
  letter-spacing: -0.4px;
  color: #1f1f1f;
}

.comment-time {
  margin-top: 3px;
  font-size: 24px;
  letter-spacing: 0;
  color: #6b7280;
}

.comment-text {
  margin: 24px 0 0;
  line-height: 40px;
  letter-spacing: -0.3px;
  color: #374151;
}

.avatar-ja {
  background-color: #d5d84e;
}

.avatar-ma {
  background-color: #40805a;
}

.comments-bar {
  position: absolute;
  top: 0;
  right: 0;
  width: 9px;
  height: 1062px;
  background-color: #d4d4d8;
}

.reply-box {
  width: 688px;
  height: 111px;
  flex-shrink: 0;
  margin: 16px 0 0 16px;
  display: flex;
  align-items: center;
  padding: 0 12px 0 13px;
  border: 2px solid #e7e7e9;
  border-radius: 24px;
  background-color: #ffffff;
}

.avatar-reply {
  width: 60px;
  height: 60px;
}

.reply-input {
  flex: 1;
  margin-left: 20px;
  padding-top: 2px;
  letter-spacing: -0.5px;
  color: #bdbdc2;
}

.send-btn {
  width: 80px;
  height: 80px;
  display: flex;
  align-items: center;
  justify-content: center;
  border: none;
  border-radius: 16px;
  background-color: #f9f9fa;
  color: #d4d4d8;
}

.send-svg {
  width: 32px;
  height: 32px;
}

/* record menu */
.menu {
  position: absolute;
  top: 127px;
  left: 2081px;
  width: 322px;
  height: 271px;
  padding-top: 15px;
  border-radius: 20px;
  background-color: #ffffff;
  box-shadow: 0 4px 24px rgba(0, 0, 0, 0.14);
  letter-spacing: -0.3px;
  color: #1f1f1f;
}

.menu-item {
  height: 74px;
  display: flex;
  align-items: center;
  gap: 21px;
  padding-left: 33px;
}

.menu-icon {
  width: 24px;
  height: 26px;
}

.menu-line {
  height: 2px;
  margin: 10px 0;
  background-color: #f4f4f5;
}

.menu-danger {
  color: #f0533f;
}
```
